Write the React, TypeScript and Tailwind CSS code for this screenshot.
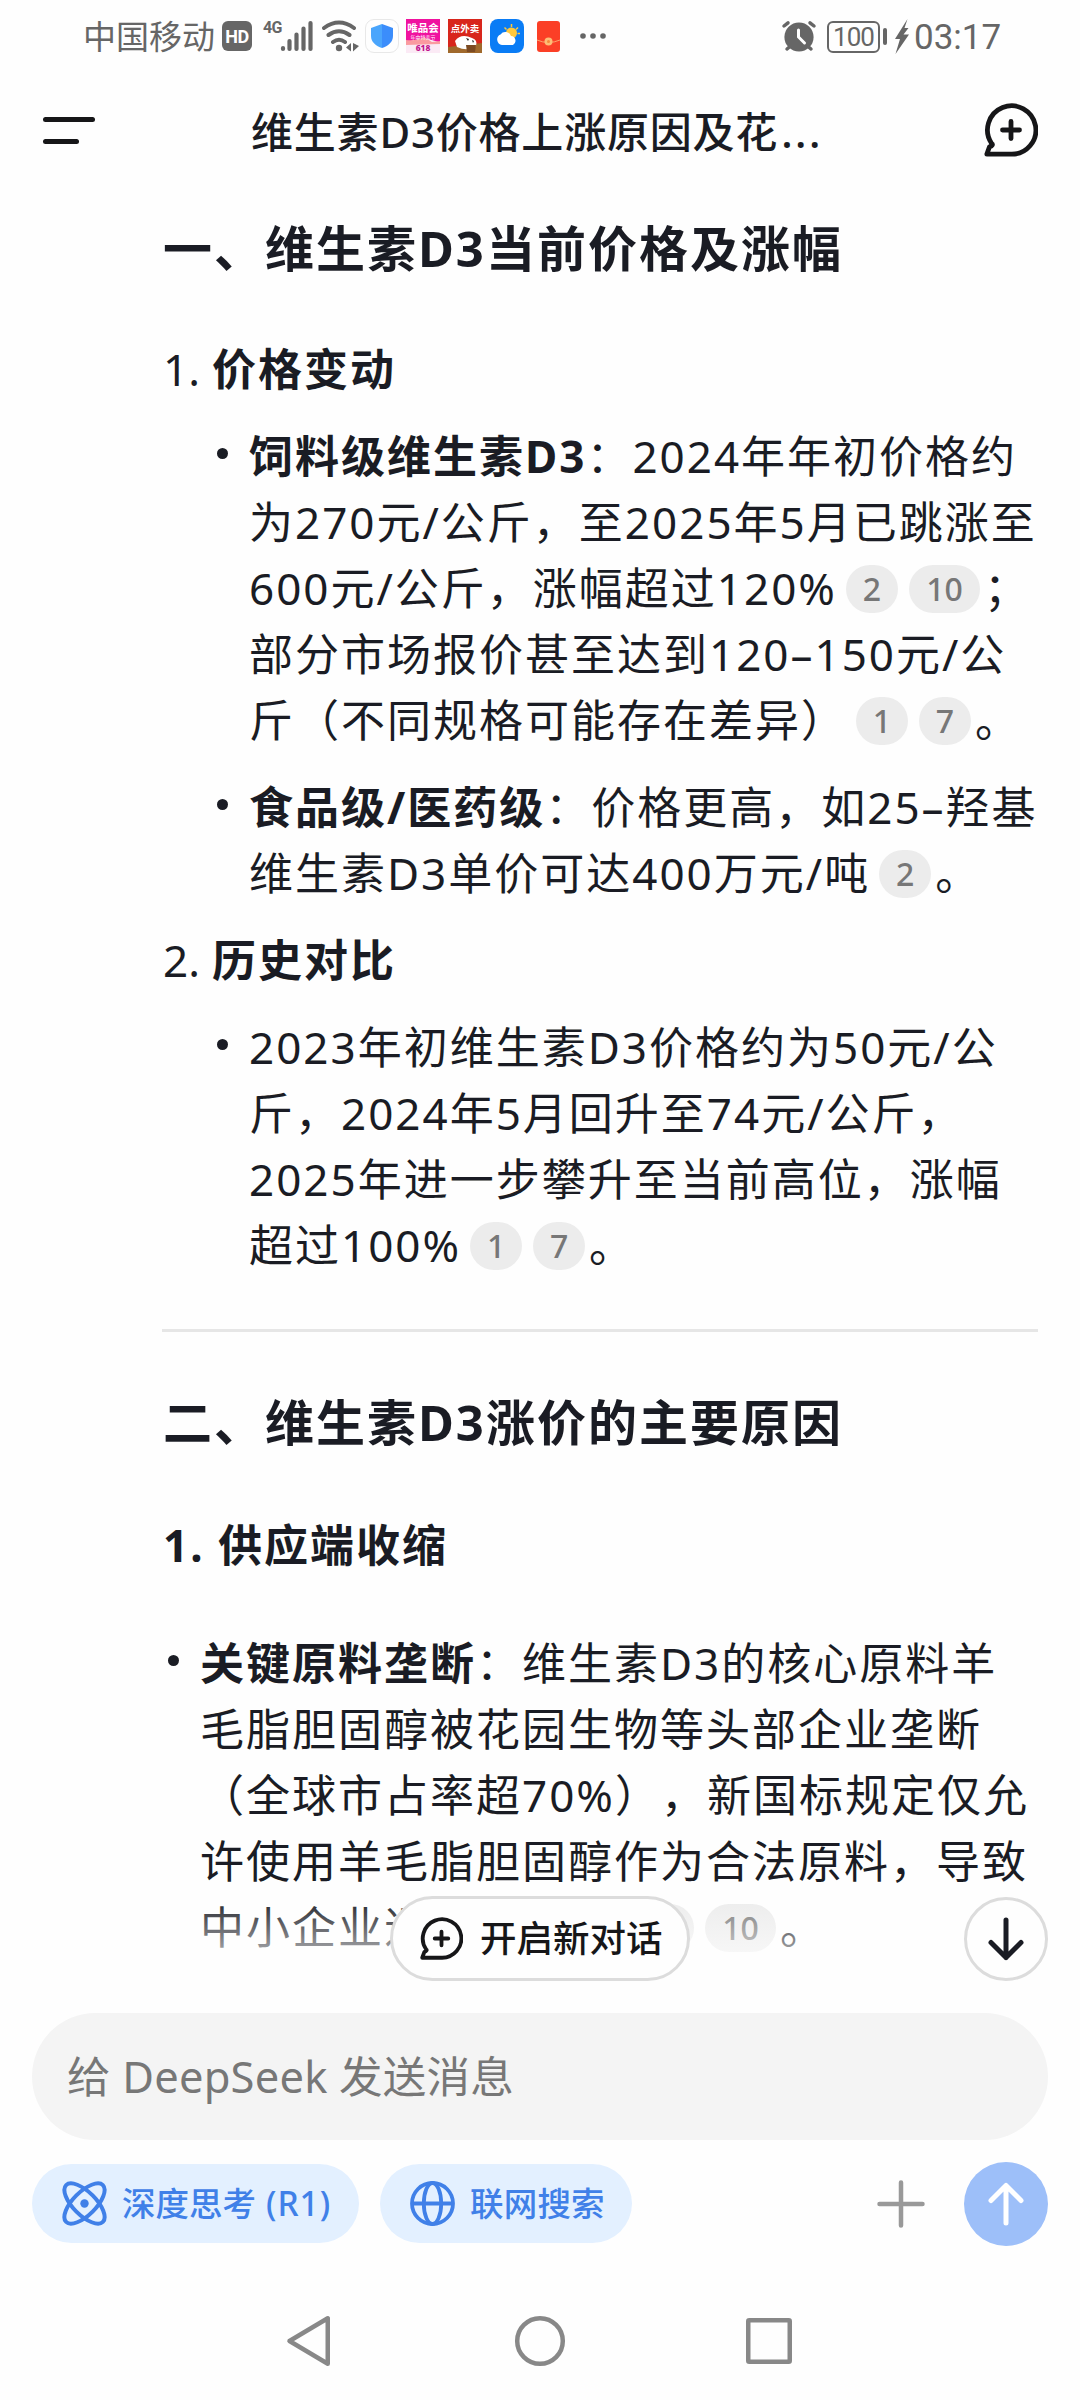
import React from 'react';

const Line: React.FC<{ children: React.ReactNode }> = ({ children }) => (
  <span className="block h-[66px] whitespace-nowrap">{children}</span>
);

const Cite: React.FC<{ n?: number }> = ({ n = 0 }) => (
  <span
    className={`inline-flex h-12 items-center justify-center rounded-full bg-[#ececec] align-[4px] text-[32px] leading-none font-medium tracking-normal text-[#777] mr-[11px] last:mr-0 ${n > 9 ? 'w-[71px]' : 'w-[52px]'}`}
  >
    {n > 0 ? n : '\u00a0'}
  </span>
);

const Cites: React.FC<{ list: number[] }> = ({ list }) => (
  <span className="ml-[9px] mr-[4px]">
    {list.map((n) => (
      <Cite key={n} n={n} />
    ))}
  </span>
);

const Bullet: React.FC<{ children: React.ReactNode }> = ({ children }) => (
  <li className="flex">
    <span className="mt-[25px] mr-[21px] h-[11px] w-[11px] shrink-0 rounded-full bg-[#1a1c24]" />
    <div>{children}</div>
  </li>
);

const NewChatIcon: React.FC<{ size: number; stroke: number }> = ({ size, stroke }) => (
  <svg width={size} height={size} viewBox="0 0 54 54" fill="none" stroke="currentColor" strokeWidth={stroke} strokeLinecap="round" strokeLinejoin="round">
    <path d="M27 51.2H2.8L5.400 44Q9.800 42 7.600 40.500A24.2 24.2 0 1 1 27 51.2Z" />
    <path d="M27 18.5V35.5M18.5 27H35.5" />
  </svg>
);

const StatusBar: React.FC = () => (
  <div className="flex h-[72px] items-start text-[#666]">
    <span className="ml-[83px] mt-[12px] h-[50px] w-[139px] whitespace-nowrap text-[33px] leading-[50px]">中国移动</span>
    <span className="mt-[21px] flex h-[30px] w-[30px] items-center justify-center rounded-[6px] bg-[#666] font-[Roboto] text-[18px] font-bold tracking-tight text-white">HD</span>
    <span className="ml-[11px] mt-[20px] w-[18px] font-[Roboto] text-[16px] leading-4 font-bold tracking-tighter">4G</span>
    <svg className="-ml-px mt-5" width="34" height="32" fill="none" stroke="#666" strokeWidth="4.200" strokeLinecap="round">
      <path d="M3 28V29M9.500 21V29M16.500 14.500V29M23.500 8.500V29M30.500 3V29" />
    </svg>
    <svg className="ml-[7px] mt-5" width="40" height="33" fill="none" stroke="#666" strokeWidth="4" strokeLinecap="round">
      <path d="M3 8Q18 -3 33 8M7.500 15Q18 7.500 28.500 15M12 22Q18 17.500 24 22" />
      <circle cx="18" cy="28" r="3.200" fill="#666" stroke="none" />
      <path d="M25 27.500L30 23V31.500M38 26L32 31.500V23Z" fill="#666" stroke="none" />
    </svg>
    <span className="ml-[4px] mt-[19px] flex h-[34px] w-[34px] items-center justify-center rounded-[9px] border border-[#e8e8e8]">
      <svg width="24" height="26" viewBox="0 0 24 26">
        <path d="M12 1L23 5V13C23 19 18 23 12 25Z" fill="#3b8dfb" />
        <path d="M12 1L1 5V13C1 19 6 23 12 25Z" fill="#4aa5fc" />
      </svg>
    </span>
    <svg className="ml-[7px] mt-[19px]" width="34" height="34">
      <rect width="34" height="34" fill="#f0129f" />
      <path d="M0 24Q8 20 17 20T34 24V34H0Z" fill="#fbeaf5" />
      <path d="M0 21Q12 22 18 18L26 23L34 22V25L0 26Z" fill="#fa9aa0" />
      <text x="17" y="13" textAnchor="middle" fontSize="10.500" fontWeight="700" fill="#fff">唯品会</text>
      <text x="17" y="19.500" textAnchor="middle" fontSize="5" fill="#fff">年中特卖节</text>
      <text x="17" y="32" textAnchor="middle" fontSize="8.500" fontWeight="800" fill="#c0148c">618</text>
    </svg>
    <svg className="ml-2 mt-[19px]" width="34" height="34">
      <rect width="34" height="34" fill="#d8261c" />
      <path d="M0 28L34 24V34H0Z" fill="#a0692c" />
      <path d="M7 22Q13 14 24 19Q30 21 28 27Q20 33 9 28Z" fill="#fff" />
      <path d="M18 26H28L27 33H19Z" fill="#7b4a22" />
      <path d="M18 19l3 1-1 2zM24 21l2 1-1 2z" fill="#222" />
      <text x="17" y="13" textAnchor="middle" fontSize="9.500" fontWeight="700" fill="#fff">点外卖</text>
    </svg>
    <svg className="ml-2 mt-[19px]" width="34" height="34">
      <rect width="34" height="34" rx="8" fill="#0a7cf5" />
      <path d="M21.500 5V8M14.500 8.500L16.500 10.500M28 8.500L26 10.500M27.500 14.500H30" stroke="#ffc83c" strokeWidth="1.500" />
      <circle cx="21.500" cy="14" r="5.500" fill="#ffc83c" />
      <path d="M12 26A5.500 5.500 0 0 1 10.500 15.500A6 6 0 0 1 21 17A4.800 4.800 0 0 1 23 26Z" fill="#fff" />
    </svg>
    <svg className="ml-[13px] mt-[21px]" width="23" height="31">
      <rect width="23" height="31" rx="3" fill="#fb3f26" />
      <path d="M0 19Q11.500 24 23 19" stroke="#fba36b" fill="none" />
      <circle cx="11.500" cy="20.500" r="4" fill="#fdbd76" />
      <circle cx="11.500" cy="20.500" r="1.500" fill="#f88a3c" />
    </svg>
    <svg className="ml-5 mt-[31px]" width="28" height="10" fill="#666">
      <circle cx="3" cy="5" r="2.800" />
      <circle cx="13" cy="5" r="2.800" />
      <circle cx="23" cy="5" r="2.800" />
    </svg>
    <div className="flex-1" />
    <svg className="mt-5" width="36" height="34" fill="none" stroke="#666" strokeWidth="3.500" strokeLinecap="round">
      <circle cx="18" cy="17" r="14.600" fill="#666" stroke="none" />
      <path d="M3 6L7 2.800M33 6L29 2.800M6 29L9 26.500M30 29L27 26.500" />
      <path d="M17.500 10V17L23.500 23" stroke="#fff" strokeWidth="3" />
    </svg>
    <span className="ml-[10px] mt-[21px] flex h-[32px] w-[53px] items-center justify-center rounded-[6px] border-[2.500px] border-[#666] font-[Roboto] text-[26px] leading-none tracking-[-1px]">100</span>
    <span className="ml-[3px] mt-[28px] h-[17px] w-[4px] rounded-[2px] bg-[#666]" />
    <svg className="ml-[8px] mt-[19px]" width="14" height="36" fill="#666">
      <path d="M12.500 0L0 20H5L.500 35L14 15.500H8.500L13.500 9H9.500Z" />
    </svg>
    <span className="ml-[5px] mr-[80px] mt-[17px] w-[86px] whitespace-nowrap font-[Roboto] text-[35px] leading-[42px]">03:17</span>
  </div>
);

const Header: React.FC = () => (
  <header className="flex h-[118px] items-start pl-[43px] pr-[42px]">
    <button className="mt-[45px] flex flex-col gap-[17px]">
      <span className="h-[5px] w-[52px] rounded-full bg-[#161618]" />
      <span className="h-[5px] w-[36px] rounded-full bg-[#161618]" />
    </button>
    <h1 className="mt-[30px] ml-[156px] whitespace-nowrap text-[42px] leading-[60px] font-medium tracking-[0.800px] text-[#1a1c24]">
      维生素D3价格上涨原因及花<span className="ml-[3px] tracking-[2.500px]">...</span>
    </h1>
    <button className="mt-[31px] ml-auto text-[#161618]">
      <NewChatIcon size={54} stroke={4.8} />
    </button>
  </header>
);

const Answer: React.FC = () => (
  <div className="pt-[25px] pl-[163px] text-[44px] leading-[66px] tracking-[2px] text-[#1a1c24] [text-spacing-trim:space-all]">
    <h2 className="text-[49px] leading-[66px] font-bold">一、维生素D3当前价格及涨幅</h2>

    <div className="mt-[55px] flex">
      <span className="w-[49px] tracking-normal">1.</span>
      <strong>价格变动</strong>
    </div>
    <ul className="mt-[21px] ml-[54px] flex flex-col gap-[21px]">
      <Bullet>
        <Line><strong>饲料级维生素D3</strong>：2024年年初价格约</Line>
        <Line>为270元/公斤，至2025年5月已跳涨至</Line>
        <Line>600元/公斤，涨幅超过120%<Cites list={[2, 10]} />；</Line>
        <Line>部分市场报价甚至达到120–150元/公</Line>
        <Line>斤（不同规格可能存在差异）<Cites list={[1, 7]} />。</Line>
      </Bullet>
      <Bullet>
        <Line><strong>食品级/医药级</strong>：价格更高，如25–羟基</Line>
        <Line>维生素D3单价可达400万元/吨<Cites list={[2]} />。</Line>
      </Bullet>
    </ul>

    <div className="mt-[21px] flex">
      <span className="w-[49px] tracking-normal">2.</span>
      <strong>历史对比</strong>
    </div>
    <ul className="mt-[21px] ml-[54px]">
      <Bullet>
        <Line>2023年初维生素D3价格约为50元/公</Line>
        <Line>斤，2024年5月回升至74元/公斤，</Line>
        <Line>2025年进一步攀升至当前高位，涨幅</Line>
        <Line>超过100%<Cites list={[1, 7]} />。</Line>
      </Bullet>
    </ul>

    <hr className="mt-[51px] mr-[42px] -ml-px border-t-[3px] border-[#e6e6e6]" />

    <h2 className="mt-[57px] text-[49px] leading-[66px] font-bold">二、维生素D3涨价的主要原因</h2>
    <h3 className="mt-[57px] font-bold">1. 供应端收缩</h3>
    <ul className="mt-[52px] ml-[5px]">
      <Bullet>
        <Line><strong>关键原料垄断</strong>：维生素D3的核心原料羊</Line>
        <Line>毛脂胆固醇被花园生物等头部企业垄断</Line>
        <Line>（全球市占率超70%），新国标规定仅允</Line>
        <Line>许使用羊毛脂胆固醇作为合法原料，导致</Line>
        <Line>
          中小企业退
          <span className="ml-[212px] mr-[4px]">
            <Cite />
            <Cite n={10} />
          </span>
          。
        </Line>
      </Bullet>
    </ul>
  </div>
);

const Composer: React.FC = () => (
  <div className="px-8 pt-[23px]">
    <div className="flex h-[127px] items-center rounded-[64px] bg-[#f4f4f4] pl-[35px] text-[43.500px] tracking-[0.200px] text-[#777]">给 DeepSeek 发送消息</div>
    <div className="mt-[24px] flex items-center">
      <button className="flex h-[79px] w-[327px] items-center rounded-full bg-[#e3f0ff] pl-[30px] whitespace-nowrap text-[33.500px] font-medium text-[#4080e8]">
        <svg className="mr-[15px]" width="45" height="45" viewBox="0 0 45 45" fill="none" stroke="currentColor" strokeWidth="4">
          <ellipse cx="22.500" cy="22.500" rx="26" ry="11.500" transform="rotate(45 22.500 22.500)" />
          <ellipse cx="22.500" cy="22.500" rx="26" ry="11.500" transform="rotate(-45 22.500 22.500)" />
          <circle cx="22.500" cy="22.500" r="4.200" fill="currentColor" stroke="none" />
        </svg>
        深度思考<span className="ml-[10px] tracking-[1px]">(R1)</span>
      </button>
      <button className="ml-[21px] flex h-[79px] w-[252px] items-center rounded-full bg-[#e3f0ff] pl-[30px] whitespace-nowrap text-[33.500px] font-medium tracking-[0.200px] text-[#4080e8]">
        <svg className="mr-[15px]" width="45" height="45" viewBox="0 0 45 45" fill="none" stroke="currentColor" strokeWidth="3.800">
          <circle cx="22.500" cy="22.500" r="20.500" />
          <ellipse cx="22.500" cy="22.500" rx="8.700" ry="20.500" />
          <path d="M2 22.500H43" />
        </svg>
        联网搜索
      </button>
      <div className="flex-1" />
      <svg className="mr-[39px]" width="48" height="48" stroke="#999" strokeWidth="4.500" strokeLinecap="round">
        <path d="M24 2.500V45.500M2.500 24H45.500" />
      </svg>
      <button className="-my-1 flex h-[84px] w-[84px] items-center justify-center rounded-full bg-[#9dbff9]">
        <svg width="36" height="44" fill="none" stroke="#fff" strokeWidth="5" strokeLinecap="round" strokeLinejoin="round">
          <path d="M18 41V3.500M3 18.500L18 3.500L33 18.500" />
        </svg>
      </button>
    </div>
  </div>
);

const NavBar: React.FC = () => (
  <div className="mt-[72px] flex items-center justify-center gap-[180px]">
    <svg width="52" height="52" fill="none" stroke="#888" strokeWidth="4.500" strokeLinejoin="round">
      <path d="M7.500 26L45.750 3.250V48.750Z" />
    </svg>
    <svg width="52" height="52" fill="none" stroke="#888" strokeWidth="4.500">
      <circle cx="26" cy="26" r="22.800" />
    </svg>
    <svg width="52" height="52" fill="none" stroke="#888" strokeWidth="4.500" strokeLinejoin="round">
      <rect x="2.250" y="5.250" width="41.500" height="41.500" rx="1" />
    </svg>
  </div>
);

const App: React.FC = () => (
  <div lang="zh-CN" className="flex h-[2400px] w-[1080px] flex-col overflow-hidden bg-[#fefefe] font-['Noto_Sans','Noto_Sans_CJK_SC',sans-serif]">
    <StatusBar />
    <Header />
    <main className="relative h-[1800px] shrink-0 overflow-hidden">
      <Answer />
      <div className="absolute inset-x-0 bottom-0 h-[94px] bg-gradient-to-b from-[#fefefe]/0 to-[#fefefe]" />
      <button className="absolute top-[1706px] left-[390px] flex h-[85px] w-[300px] items-center rounded-full border-[3px] border-[#dcdcdc] bg-[#fefefe] pl-[27px] whitespace-nowrap text-[36.500px] font-medium text-[#161618]">
        <span className="mr-[17px]"><NewChatIcon size={43} stroke={4.8} /></span>
        开启新对话
      </button>
      <button className="absolute top-[1707px] left-[964px] flex h-[84px] w-[84px] items-center justify-center rounded-full border-[3px] border-[#dcdcdc] bg-[#fefefe]">
        <svg width="36" height="44" fill="none" stroke="#1a1c24" strokeWidth="5" strokeLinecap="round" strokeLinejoin="round">
          <path d="M18 3V40.500M3 25.500L18 40.500L33 25.500" />
        </svg>
      </button>
    </main>
    <Composer />
    <NavBar />
  </div>
);

export default App;
